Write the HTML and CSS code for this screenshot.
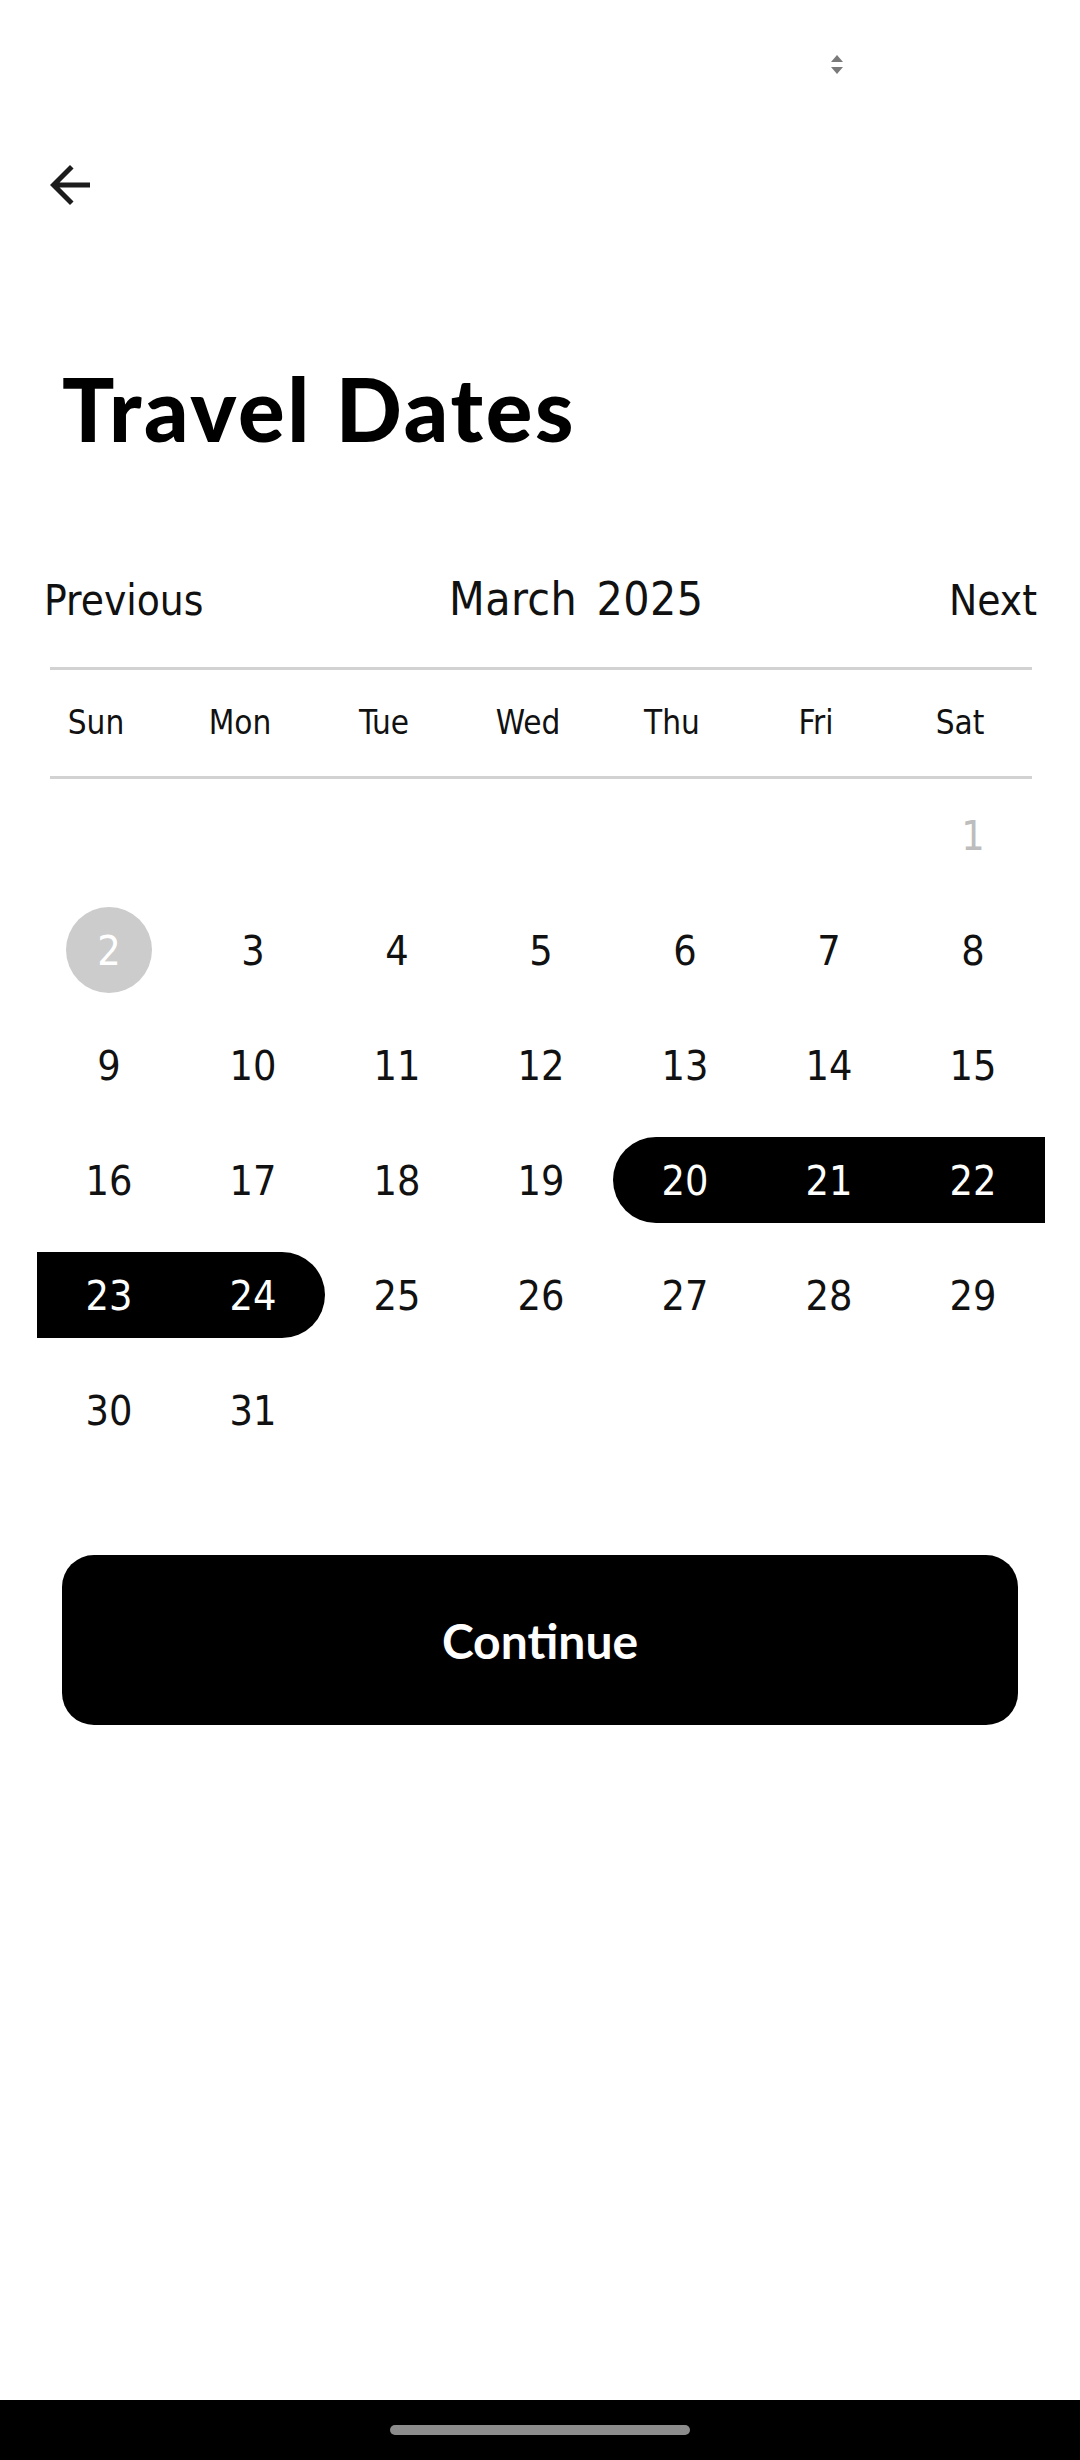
FILE: index.html
```
<!DOCTYPE html>
<html lang="en">
<head>
<meta charset="utf-8">
<title>Travel Dates</title>
<link rel="stylesheet" href="styles.css">
</head>
<body>
<div class="screen">
  <div class="statusbar">
    <svg class="sort-icon" width="12" height="20" viewBox="0 0 12 20"><polygon points="0,7 6,0 12,7" fill="#7a7a7a"/><polygon points="0,12 12,12 6,19" fill="#7a7a7a"/></svg>
  </div>
  <div class="topbar">
    <svg class="back" width="60" height="60" viewBox="0 0 24 24"><path d="M20 11H7.83l5.59-5.59L12 4l-8 8 8 8 1.41-1.41L7.83 13H20v-2z" fill="#1c1c1c"/></svg>
  </div>
  <h1 class="title">Travel Dates</h1>
  <div class="monthnav">
    <span class="nav-btn">Previous</span>
    <span class="month">March 2025</span>
    <span class="nav-btn">Next</span>
  </div>
  <div class="rule"></div>
  <div class="weekdays">
    <span>Sun</span><span>Mon</span><span>Tue</span><span>Wed</span><span>Thu</span><span>Fri</span><span>Sat</span>
  </div>
  <div class="rule"></div>
  <div class="days">
    <div class="day"></div><div class="day"></div><div class="day"></div><div class="day"></div><div class="day"></div><div class="day"></div><div class="day muted">1</div>
    <div class="day"><span class="today">2</span></div><div class="day">3</div><div class="day">4</div><div class="day">5</div><div class="day">6</div><div class="day">7</div><div class="day">8</div>
    <div class="day">9</div><div class="day">10</div><div class="day">11</div><div class="day">12</div><div class="day">13</div><div class="day">14</div><div class="day">15</div>
    <div class="day">16</div><div class="day">17</div><div class="day">18</div><div class="day">19</div><div class="day sel sel-start">20</div><div class="day sel">21</div><div class="day sel">22</div>
    <div class="day sel">23</div><div class="day sel sel-end">24</div><div class="day">25</div><div class="day">26</div><div class="day">27</div><div class="day">28</div><div class="day">29</div>
    <div class="day">30</div><div class="day">31</div><div class="day"></div><div class="day"></div><div class="day"></div><div class="day"></div><div class="day"></div>
  </div>
  <button class="continue">Continue</button>
  <div class="navbar"><div class="handle"></div></div>
</div>
</body>
</html>
```
FILE: styles.css
```
* { box-sizing: border-box; }
html, body { margin: 0; padding: 0; background: #fff; }
.screen {
  width: 1080px;
  min-height: 2460px;
  display: flex;
  flex-direction: column;
  background: #fff;
  color: #111;
}
.statusbar {
  height: 110px;
  padding: 55px 0 0 831px;
}
.sort-icon { display: block; }
.topbar {
  padding: 45px 0 0 40px;
  height: 105px;
}
.back { display: block; }
.title {
  margin: 142px 0 0 0;
  padding-left: 62px;
  font-family: "Lato", sans-serif;
  font-weight: 900;
  font-size: 87px;
  line-height: 104px;
  letter-spacing: 2.8px;
  color: #000;
}
.monthnav {
  margin-top: 114px;
  padding: 0 43px 0 44px;
  display: flex;
  justify-content: space-between;
  align-items: baseline;
  font-family: "DejaVu Sans Condensed", "DejaVu Sans", sans-serif;
  font-stretch: condensed;
  color: #111;
}
.nav-btn { font-size: 42px; line-height: 48px; }
.month { font-size: 46px; line-height: 48px; word-spacing: 6px; letter-spacing: 0.4px; }
.rule {
  height: 3px;
  margin: 0 48px 0 50px;
  background: #d2d2d2;
}
.monthnav + .rule { margin-top: 42px; }
.weekdays {
  height: 106px;
  margin-left: 24px;
  display: grid;
  grid-template-columns: repeat(7, 144px);
  align-items: center;
  justify-items: center;
  font-family: "DejaVu Sans Condensed", "DejaVu Sans", sans-serif;
  font-stretch: condensed;
  font-size: 33px;
  line-height: 40px;
  color: #111;
}
.days {
  margin: 13px 0 0 37px;
  display: grid;
  grid-template-columns: repeat(7, 144px);
  grid-auto-rows: 86px;
  row-gap: 29px;
  font-family: "DejaVu Sans Condensed", "DejaVu Sans", sans-serif;
  font-stretch: condensed;
  font-size: 41px;
  line-height: 1;
}
.day {
  display: flex;
  align-items: center;
  justify-content: center;
  padding-top: 2px;
  color: #111;
}
.day.muted { color: #bdbdbd; }
.today {
  width: 86px;
  height: 86px;
  margin-top: -2px;
  border-radius: 50%;
  background: #cccccc;
  color: #fff;
  display: flex;
  align-items: center;
  justify-content: center;
  padding-top: 2px;
}
.sel { background: #000; color: #fff; }
.sel-start { border-radius: 43px 0 0 43px; }
.sel-end { border-radius: 0 43px 43px 0; }
.continue {
  margin: 102px 62px 0 62px;
  height: 170px;
  border: none;
  border-radius: 32px;
  background: #000;
  color: #fff;
  font-family: "Lato", sans-serif;
  font-weight: 700;
  font-size: 48px;
  padding: 0;
  cursor: pointer;
}
.navbar {
  margin-top: auto;
  height: 60px;
  background: #000;
  padding-top: 25px;
  display: flex;
  justify-content: center;
}
.handle {
  width: 300px;
  height: 10px;
  border-radius: 5px;
  background: #8c8c8c;
}
```
